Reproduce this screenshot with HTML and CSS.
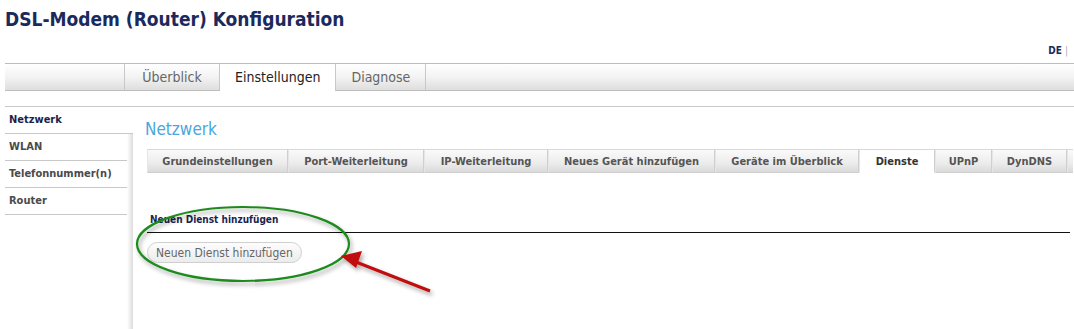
FILE: index.html
```html
<!DOCTYPE html>
<html lang="de">
<head>
  <meta charset="UTF-8" />
  <title>DSL-Modem (Router) Konfiguration</title>
  <link rel="stylesheet" href="styles.css">
</head>
<body>
  <h1 class="title">DSL-Modem (Router) Konfiguration</h1>
  <div class="lang">DE <span class="sep">|</span></div>

  <nav class="mainnav">
    <div class="spacer"></div>
    <a class="tab">Überblick</a>
    <a class="tab active">Einstellungen</a>
    <a class="tab">Diagnose</a>
  </nav>

  <div class="page">
    <ul class="sidebar">
      <li class="active">Netzwerk</li>
      <li>WLAN</li>
      <li>Telefonnummer(n)</li>
      <li>Router</li>
    </ul>

    <main class="content">
      <h2>Netzwerk</h2>
      <div class="subtabs">
        <a>Grundeinstellungen</a>
        <a>Port-Weiterleitung</a>
        <a>IP-Weiterleitung</a>
        <a>Neues Gerät hinzufügen</a>
        <a>Geräte im Überblick</a>
        <a class="active">Dienste</a>
        <a>UPnP</a>
        <a>DynDNS</a>
        <a class="cut"></a>
      </div>

      <h3 class="block-title">Neuen Dienst hinzufügen</h3>
      <button class="pill">Neuen Dienst hinzufügen</button>
    </main>
  </div>

  <!-- annotation drawn on top of the screenshot -->
  <svg class="markup" width="1074" height="329" viewBox="0 0 1074 329">
    <defs>
      <filter id="soft" x="-20%" y="-20%" width="140%" height="140%">
        <feDropShadow dx="2" dy="3" stdDeviation="2" flood-color="#000" flood-opacity="0.35"/>
      </filter>
    </defs>
    <ellipse cx="243" cy="244" rx="106" ry="37" fill="none" stroke="#1f8a1f" stroke-width="2.2" filter="url(#soft)"/>
    <g filter="url(#soft)">
      <line x1="430" y1="291" x2="356" y2="262" stroke="#c00d0d" stroke-width="3"/>
      <polygon points="341,256 362,251 356,268" fill="#c00d0d"/>
    </g>
  </svg>
</body>
</html>
```

FILE: styles.css
```css
body {
  margin: 0;
  padding: 0 0 0 5px;
  font-family: "DejaVu Sans Condensed", "DejaVu Sans", sans-serif;
  color: #333;
  background: #fff;
  position: relative;
  height: 329px;
  overflow: hidden;
}

.title {
  margin: 6px 0 0;
  font-size: 19px;
  line-height: 26px;
  color: #1b2a5c;
}

.lang {
  text-align: right;
  font-size: 10px;
  font-weight: bold;
  color: #1b2a5c;
  margin: 13px 6px 0 0;
  line-height: 12px;
}

.lang .sep {
  color: #aaa;
  font-weight: normal;
}

.mainnav {
  display: flex;
  margin-top: 6px;
  height: 26px;
  border-top: 1px solid #bdbdbd;
  border-bottom: 1px solid #bdbdbd;
  background: linear-gradient(#fff, #f3f3f3 50%, #dedede);
}

.mainnav .spacer {
  width: 119px;
  border-right: 1px solid #c8c8c8;
}

.mainnav .tab {
  padding: 0 11px;
  line-height: 26px;
  font-size: 14px;
  color: #666;
  border-right: 1px solid #c8c8c8;
}

.mainnav .tab:nth-child(2) { width: 72px; text-align: center; }
.mainnav .tab:nth-child(4) { width: 67px; text-align: center; }

.mainnav .tab.active {
  background: #fff;
  color: #222;
  padding: 0 15px;
  margin-bottom: -1px;
}

.page {
  display: flex;
  margin-top: 15px;
  border-top: 1px solid #c8c8c8;
}

.sidebar {
  list-style: none;
  margin: 0;
  padding: 0;
  width: 128px;
  min-height: 230px;
  background: linear-gradient(to right, #fff 122px, #f4f4f4 124px, #dcdcdc 128px);
}

.sidebar li {
  height: 26px;
  line-height: 26px;
  padding-left: 4px;
  font-size: 11px;
  font-weight: bold;
  color: #4a4a4a;
  border-bottom: 1px solid #c8c8c8;
  margin-right: 6px;
}

.sidebar li.active {
  color: #1b1f4e;
  background: #fff;
  margin-right: 0;
}

.content {
  flex: 1;
  padding-left: 12px;
}

.content h2 {
  margin: 12px 0 0;
  font-size: 17px;
  font-weight: normal;
  color: #4ba6dd;
  line-height: 21px;
}

.subtabs {
  display: flex;
  margin: 9px 0 0 2px;
  height: 24px;
}

.subtabs a {
  display: block;
  font-size: 11px;
  font-weight: bold;
  color: #555;
  line-height: 23px;
  text-align: center;
  border: 1px solid #cfcfcf;
  border-left: 1px solid #e6e6e6;
  border-top-color: #d8d8d8;
  background: linear-gradient(#fafafa, #ececec 60%, #dadada);
  box-sizing: border-box;
}

.subtabs a:nth-child(1) { width: 141px; }
.subtabs a:nth-child(2) { width: 136px; }
.subtabs a:nth-child(3) { width: 124px; }
.subtabs a:nth-child(4) { width: 167px; }
.subtabs a:nth-child(5) { width: 144px; }
.subtabs a:nth-child(6) { width: 76px; }
.subtabs a:nth-child(7) { width: 57px; }
.subtabs a:nth-child(8) { width: 75px; }
.subtabs a.cut { width: 6px; border-right: none; }

.subtabs a.active {
  background: #fff;
  border-bottom-color: #fff;
  color: #333;
}

.block-title {
  margin: 40px 4px 0 2px;
  padding: 0 0 5px 3px;
  font-size: 10px;
  font-weight: bold;
  color: #1b1f4e;
  line-height: 14px;
  border-bottom: 1px solid #111;
}

.pill {
  margin: 9px 0 0 2px;
  height: 21px;
  padding: 0 8px;
  font-family: inherit;
  font-size: 12px;
  color: #666;
  border: 1px solid #cfcfcf;
  border-radius: 11px;
  background: linear-gradient(#fdfdfd, #ececec);
}

.markup {
  position: absolute;
  left: 0;
  top: 0;
  pointer-events: none;
}
```
